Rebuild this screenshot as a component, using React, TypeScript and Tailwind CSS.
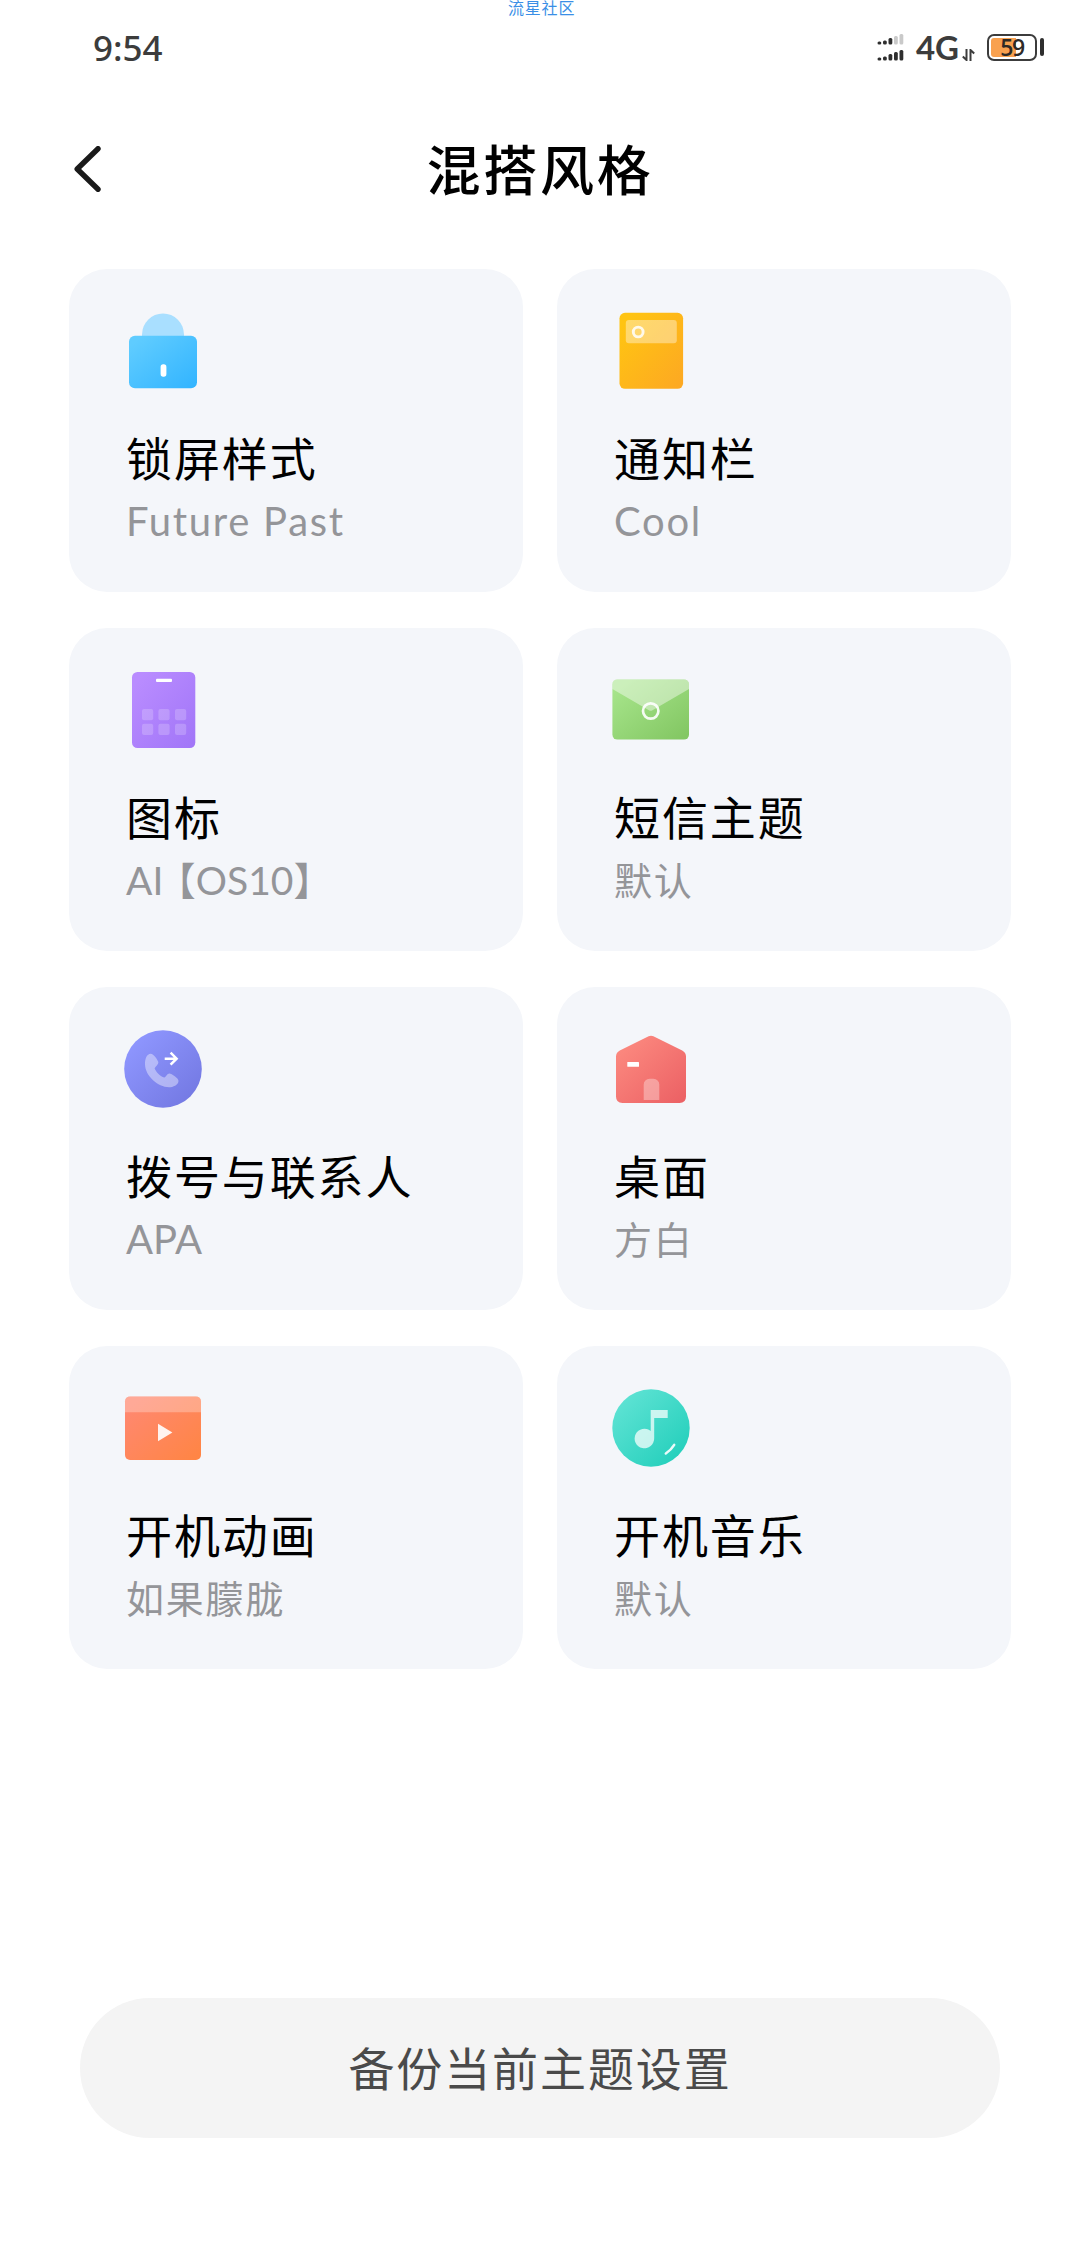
import type { ReactNode } from "react";

function Gradient({ id, from, to }: { id: string; from: string; to: string }) {
  return (
    <linearGradient id={id} x1="0" y1="0" x2="1" y2="1">
      <stop offset="0.1" stopColor={from} />
      <stop offset="0.95" stopColor={to} />
    </linearGradient>
  );
}

function Icon({ children }: { children: ReactNode }) {
  return (
    <svg className="size-[78px]" viewBox="0 0 78 78" fill="none">
      {children}
    </svg>
  );
}

const LockIcon = (
  <Icon>
    <Gradient id="lock" from="#5fccff" to="#34b5ff" />
    <path d="M18 24v-1.5a21 21 0 0 1 42 0V24z" fill="#a9dfff" />
    <rect x="5" y="23.7" width="68" height="52.6" rx="6" fill="url(#lock)" />
    <rect x="36.6" y="52.3" width="5.8" height="12.4" rx="2.6" fill="#fff" />
  </Icon>
);

const PanelIcon = (
  <Icon>
    <Gradient id="panel" from="#ffc412" to="#fda922" />
    <rect x="7.5" y="0.8" width="63.6" height="76" rx="5.5" fill="url(#panel)" />
    <rect x="13.8" y="8" width="51" height="23.3" rx="3" fill="#fff" fillOpacity="0.38" />
    <circle cx="26.2" cy="20" r="4.9" stroke="#fff" strokeOpacity="0.85" strokeWidth="2.9" />
  </Icon>
);

const GridIcon = (
  <Icon>
    <Gradient id="grid" from="#b98cff" to="#a276f8" />
    <rect x="8" y="1" width="63.3" height="76" rx="5.5" fill="url(#grid)" />
    <rect x="32" y="7.7" width="16" height="3.3" rx="1" fill="#fff" />
    {[38, 52.8].map((y) =>
      [18, 34.4, 51].map((x) => (
        <rect key={`${x}-${y}`} x={x} y={y} width="11.2" height="11.2" rx="2" fill="#fff" fillOpacity="0.2" />
      ))
    )}
  </Icon>
);

const MailIcon = (
  <Icon>
    <Gradient id="mail" from="#a6e48a" to="#83c763" />
    <rect x="0.4" y="8.4" width="76.6" height="60.2" rx="5" fill="url(#mail)" />
    <path d="M0.4 18V13.4a5 5 0 0 1 5-5H72a5 5 0 0 1 5 5V18L40.5 39.3q-1.8 1-3.6 0z" fill="#fff" fillOpacity="0.42" />
    <circle cx="38.7" cy="40" r="7.7" stroke="#fff" strokeOpacity="0.9" strokeWidth="2.7" />
  </Icon>
);

const PhoneIcon = (
  <Icon>
    <Gradient id="phone" from="#8f97ff" to="#7277e1" />
    <circle cx="39" cy="39" r="38.8" fill="url(#phone)" />
    <path
      d="M26.6 23.7C29.5 23.5 33.5 29.5 34.3 32C34.8 34.2 31.2 36.8 30.6 38.6C32 42 36.6 46.8 40.2 47.6C42 47 43.4 43.5 45.4 43.6C47.6 43.8 54.6 48.2 54.5 51C54.3 55 49 57.3 45 57.3C34 57 21 46 21 34C21 28 23 24 26.6 23.7Z"
      fill="#fff"
      fillOpacity="0.4"
    />
    <path d="M40.7 28.7H52M46.6 22.7L52.6 28.7L46.6 34.7" stroke="#fff" strokeWidth="2.5" />
  </Icon>
);

const HomeIcon = (
  <Icon>
    <Gradient id="home" from="#fc897f" to="#ec6265" />
    <path
      d="M36.6 6.3q2.4-1.2 4.8 0L70.2 20.4q3.8 2 3.8 6V66.5q0 6.5-6.5 6.5H10.5Q4 73 4 66.5V26.4q0-4 3.8-6z"
      fill="url(#home)"
    />
    <path d="M31.7 70V54.5a5.8 5.8 0 0 1 5.8-5.8h4a5.8 5.8 0 0 1 5.8 5.8V70z" fill="#fff" fillOpacity="0.34" />
    <rect x="15.3" y="32" width="11.7" height="4.8" rx="0.6" fill="#fff" />
  </Icon>
);

const VideoIcon = (
  <Icon>
    <Gradient id="video" from="#ff8870" to="#ff8545" />
    <rect x="1" y="7.4" width="76" height="63.6" rx="5" fill="url(#video)" />
    <path d="M1 23.3V12.4a5 5 0 0 1 5-5H72a5 5 0 0 1 5 5V23.3z" fill="#fff" fillOpacity="0.28" />
    <path d="M34 34.7L48.4 43.5L34 52.3z" fill="#fff" fillOpacity="0.9" />
  </Icon>
);

const MusicIcon = (
  <Icon>
    <Gradient id="music" from="#5fe3d4" to="#20ceba" />
    <circle cx="39" cy="39" r="38.7" fill="url(#music)" />
    <path
      d="M38.7 42V21H55.7V29H42.2V49.3A9.8 9.8 0 1 1 38.7 42z"
      fill="#fff"
      fillOpacity="0.72"
    />
    <path d="M53.8 64.5Q59 61 62.2 55.8" stroke="#fff" strokeOpacity="0.9" strokeWidth="2.5" strokeLinecap="round" />
  </Icon>
);

const cjk = "text-[38px] tracking-[1.8px]";
const latin = "text-[40px] tracking-[1.7px]";

// half-width brackets, so the gap before 【 is a plain margin
const iconPack = (
  <>
    AI<span className="ml-[13px] [font-feature-settings:'halt']">【OS10】</span>
  </>
);

const items = [
  { icon: LockIcon, title: "锁屏样式", value: "Future Past", text: latin },
  { icon: PanelIcon, title: "通知栏", value: "Cool", text: latin },
  { icon: GridIcon, title: "图标", value: iconPack, text: "text-[39px]" },
  { icon: MailIcon, title: "短信主题", value: "默认", text: cjk },
  { icon: PhoneIcon, title: "拨号与联系人", value: "APA", text: "text-[40px]" },
  { icon: HomeIcon, title: "桌面", value: "方白", text: cjk },
  { icon: VideoIcon, title: "开机动画", value: "如果朦胧", text: cjk },
  { icon: MusicIcon, title: "开机音乐", value: "默认", text: cjk },
];

const bars = [3, 4, 6.5, 8.5, 10.5];

function Signal() {
  return (
    <svg className="h-7 w-[27px]" viewBox="0 0 27 28">
      {bars.map((h, i) => (
        <rect key={i} x={0.5 + i * 5.5} y={11.5 - h} width="3.8" height={h} rx="1.5" fill={i > 2 ? "#c9c9c9" : "#2e2e2e"} />
      ))}
      {bars.map((h, i) => (
        <rect key={i} x={0.5 + i * 5.5} y={27.5 - h} width="3.8" height={h} rx="1.5" fill="#2e2e2e" />
      ))}
    </svg>
  );
}

function StatusBar() {
  return (
    <div className="relative flex h-[94px] items-center justify-between pr-9 pl-[93px] text-[#3c3c3c]">
      <span className="font-['Noto_Sans'] text-[35px] leading-none font-medium">9:54</span>
      <span className="absolute top-0 left-[508px] text-[16px] leading-4 tracking-[0.8px] text-[#3a8fe6]">流星社区</span>
      <div className="flex items-center">
        <Signal />
        <span className="ml-3 font-['Lato'] text-[33px] leading-none font-bold">4G</span>
        <svg className="mt-[15px] ml-[3px] h-3 w-[13px]" viewBox="0 0 13 12" fill="none" stroke="#3c3c3c" strokeWidth="2">
          <path d="M4.5 0V11L0.8 7.5M8.5 12V1L12.2 4.5" />
        </svg>
        <div className="relative ml-3 h-[27px] w-[50px] rounded-[7px] border-2 border-[#3c3c3c] p-0.5">
          <div className="h-full w-[59%] rounded-l-[3px] bg-[#f9a14f]" />
          <span className="absolute inset-0 flex items-center justify-center font-['Open_Sans'] text-[23px] leading-none font-semibold tracking-[-1.5px] text-[#2e2a26]">
            59
          </span>
        </div>
        <div className="ml-[3px] h-[18px] w-1 rounded-[2px] bg-[#2e2e2e]" />
      </div>
    </div>
  );
}

export default function App() {
  return (
    <main className="flex h-[2248px] w-[1080px] flex-col bg-white font-['Lato','Noto_Sans_CJK_SC',sans-serif]">
      <StatusBar />
      <header className="grid h-[175px] grid-cols-[1fr_auto_1fr] items-start pt-[41px]">
        <svg className="mt-[11px] ml-[73px] h-[46px] w-7" viewBox="0 0 28 46" fill="none">
          <path d="M25 2.7L4.2 23L25 43.3" stroke="#1a1a1a" strokeWidth="5.4" strokeLinecap="round" strokeLinejoin="round" />
        </svg>
        <h1 className="text-[54px] leading-[72px] font-medium tracking-[2.7px] text-black">混搭风格</h1>
      </header>
      <section className="grid grid-cols-2 gap-x-[34px] gap-y-9 px-[69px]">
        {items.map(({ icon, title, value, text }) => (
          <div key={title} className="h-[323px] rounded-[38px] bg-[#f4f6fa] pt-[43px] pl-[55px]">
            {icon}
            <h2 className="mt-[41px] ml-0.5 text-[46px] leading-[56px] tracking-[1.9px] text-black">{title}</h2>
            <p className={`mt-1.5 ml-0.5 leading-[56px] text-[#949599] ${text}`}>{value}</p>
          </div>
        ))}
      </section>
      <button className="mx-20 mt-auto mb-[110px] h-[140px] rounded-full bg-[#f4f4f4] text-[46px] tracking-[1.9px] text-[#4a4a4a]">
        备份当前主题设置
      </button>
    </main>
  );
}
